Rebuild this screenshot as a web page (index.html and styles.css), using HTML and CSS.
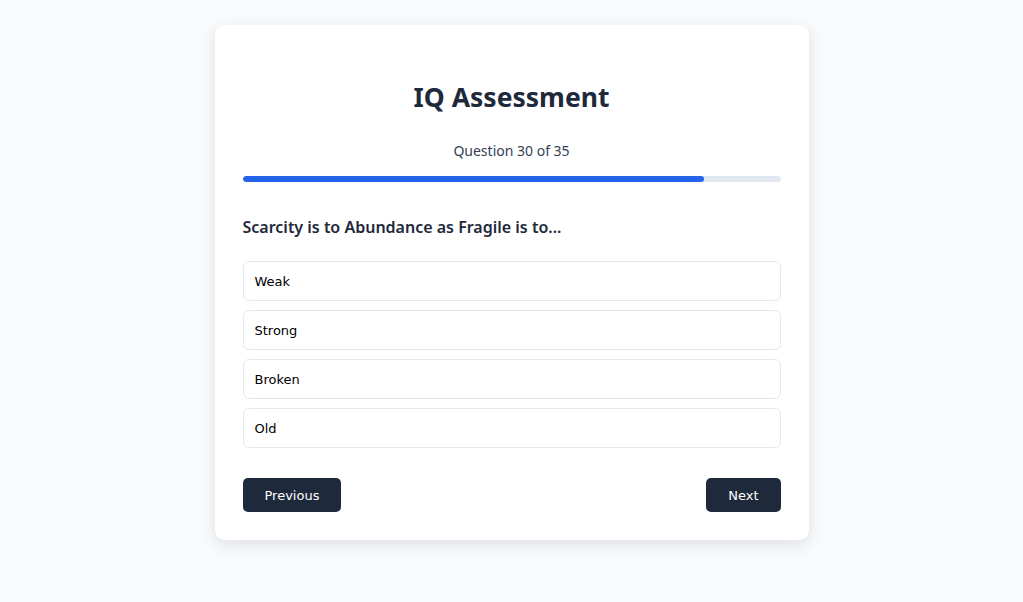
FILE: index.html
```html
<!DOCTYPE html>
<html lang="en">
<head>
<meta charset="utf-8">
<title>IQ Assessment</title>
<link rel="stylesheet" href="styles.css">
</head>
<body>
<main class="card">
  <h1 class="title">IQ Assessment</h1>
  <p class="counter">Question 30 of 35</p>
  <div class="progress"><div class="progress-fill" style="width: 85.714%"></div></div>
  <h2 class="question">Scarcity is to Abundance as Fragile is to...</h2>
  <div class="options">
    <button class="option">Weak</button>
    <button class="option">Strong</button>
    <button class="option">Broken</button>
    <button class="option">Old</button>
  </div>
  <div class="nav">
    <button class="btn">Previous</button>
    <button class="btn">Next</button>
  </div>
</main>
</body>
</html>
```

FILE: styles.css
```css
* { box-sizing: border-box; }
html, body { margin: 0; padding: 0; }
html { background: #f8fafc; }
body {
  min-height: 100vh;
  background: #f8fafc;
  font-family: "Noto Sans", "Open Sans", sans-serif;
  color: #1e293b;
  padding-top: 25px;
}
.card {
  width: 594px;
  margin: 0 auto;
  background: #ffffff;
  border-radius: 10px;
  box-shadow: 0 5px 16px rgba(15, 23, 42, 0.11);
  padding: 52px 28px 28px;
}
.title {
  margin: 0;
  text-align: center;
  font-size: 26.5px;
  line-height: 40px;
  font-weight: 700;
  color: #1e293b;
}
.counter {
  margin: 24px 0 0;
  text-align: center;
  font-size: 14px;
  line-height: 20px;
  color: #334155;
}
.progress {
  margin-top: 15px;
  height: 6px;
  background: #e2e8f0;
  border-radius: 3px;
  overflow: hidden;
}
.progress-fill {
  height: 100%;
  background: #2563eb;
  border-radius: 3px;
}
.question {
  margin: 33px 0 0;
  font-size: 16px;
  line-height: 24px;
  font-weight: 600;
  color: #1e293b;
}
.options {
  margin-top: 22px;
  display: flex;
  flex-direction: column;
  gap: 9px;
}
.option {
  display: block;
  width: 100%;
  height: 40px;
  text-align: left;
  padding: 0 11px;
  background: #ffffff;
  border: 1px solid #e2e8f0;
  border-radius: 6px;
  font-family: "DejaVu Sans", sans-serif;
  font-size: 13px;
  color: #000000;
}
.nav {
  margin-top: 30px;
  display: flex;
  justify-content: space-between;
}
.btn {
  height: 34px;
  padding: 0 22px;
  background: #1e293b;
  color: #ffffff;
  border: none;
  border-radius: 5px;
  font-family: "DejaVu Sans", sans-serif;
  font-size: 13px;
}
```
